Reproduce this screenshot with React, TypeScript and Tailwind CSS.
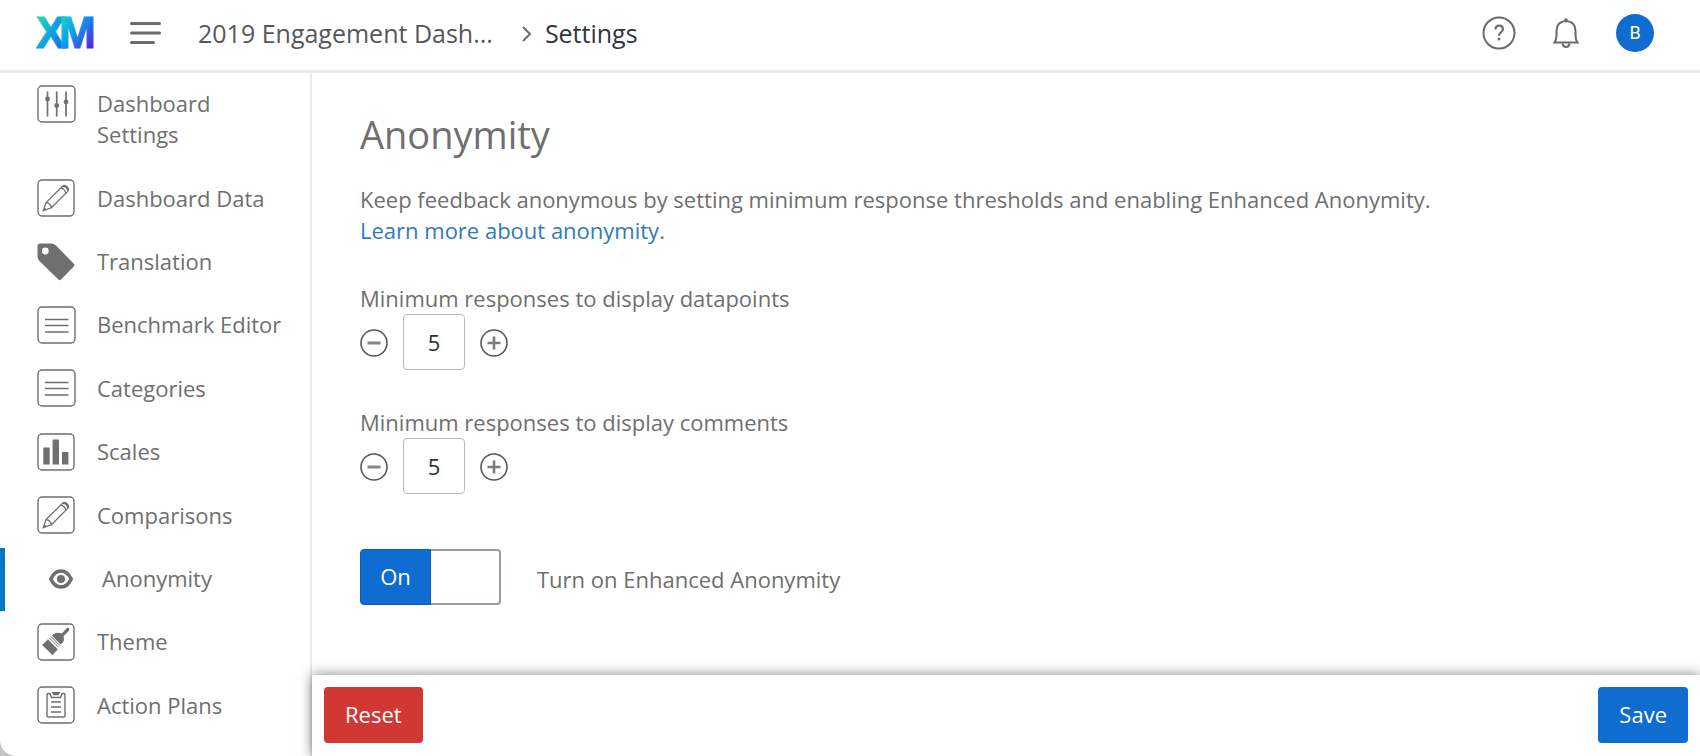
import * as React from 'react';
import clsx from 'clsx';

type IconProps = { children: React.ReactNode; width?: number };

// Rounded frame that most of the sidebar icons sit in
function BoxIcon({ children, width = 38 }: IconProps) {
    return (
        <svg width={width} height="38" viewBox={`0 0 ${width} 38`} fill="none" stroke="#6f6f6f" strokeWidth="1.4" className="shrink-0" aria-hidden="true">
            <rect x="1" y="1" width={width - 2} height="36" rx="4" />
            {children}
        </svg>
    );
}

function SlidersIcon() {
    return (
        <BoxIcon width={39}>
            <path d="M10.5 6.5v25M19.7 6.5v25M29 6.5v25" strokeWidth="1.7" />
            <g fill="#6f6f6f" stroke="none">
                <circle cx="10.5" cy="14" r="2.4" />
                <circle cx="19.7" cy="20.5" r="2.4" />
                <circle cx="29" cy="17" r="2.4" />
            </g>
        </BoxIcon>
    );
}

function PencilIcon() {
    return (
        <BoxIcon>
            <path d="M6.3 31.7 9 23.6 25.6 7.2q1.8-1.6 4 .2l1 1q1.8 2.2.2 4L14.4 28.8ZM9 23.6q4.6.6 5.4 5.2M23.6 9.2q4.2.4 5.2 5.2M26 7q4.4.8 5 5.4M7.2 29l1.9 1.7" strokeWidth="1.3" />
        </BoxIcon>
    );
}

function TagIcon() {
    return (
        <svg width="38" height="38" viewBox="0 0 38 38" fill="#6f6f6f" className="shrink-0" aria-hidden="true">
            <path fillRule="evenodd" d="M3 .5h11.5q2.5 0 4.5 2L36.8 20.8q1.2 1.3 0 2.6L24 36.6q-1.3 1.2-2.6 0L2.5 18Q.5 16 .5 13.5V3Q.5.5 3 .5ZM8.3 4.6a3.4 3.4 0 1 0 0 6.8 3.4 3.4 0 0 0 0-6.8Z" />
        </svg>
    );
}

function ListIcon() {
    return (
        <BoxIcon width={39}>
            <path d="M8 13.5h23.5M8 19.5h23.5M8 26h23.5" strokeWidth="1.5" />
        </BoxIcon>
    );
}

function BarsIcon() {
    return (
        <BoxIcon>
            <g fill="#6f6f6f" stroke="none">
                <rect x="6.3" y="14.5" width="6.4" height="17" rx=".5" />
                <rect x="15.6" y="6.5" width="6.4" height="25" rx=".5" />
                <rect x="25" y="19" width="6.4" height="12.5" rx=".5" />
            </g>
        </BoxIcon>
    );
}

function EyeIcon() {
    return (
        <svg width="38" height="38" viewBox="0 0 38 38" fill="none" stroke="#6f6f6f" className="shrink-0" aria-hidden="true">
            <path d="M8.8 19Q12.5 11 19 11t10.2 8Q25.5 27 19 27T8.8 19Z" strokeWidth="3.6" strokeLinejoin="round" />
            <circle cx="19" cy="19" r="4" fill="#6f6f6f" stroke="none" />
        </svg>
    );
}

function BrushIcon() {
    return (
        <BoxIcon>
            <g fill="#6f6f6f" stroke="none">
                <path d="M29.5 5.5q1.5-1.2 2.5-.2t-.1 2.5L26.5 13.2q1.2 3.500-.5 6L23.7 21.5 14.8 12.5q1.7-1.8 4.2-2.5 3-.9 5.7.4Z" />
                <path d="M11 16.2 20.8 26.4 15.3 32 6.8 23.5 5.3 22Z" />
                <path d="M5.3 22 9.5 19.5v6.5Z" />
            </g>
            <path d="M13.8 13.3 23 22.6M12.3 14.8 21.7 24.4" strokeWidth="1" />
        </BoxIcon>
    );
}

function ClipboardIcon() {
    return (
        <BoxIcon>
            <path d="M13 7.5h-1.5q-1.5 0-1.5 1.5v20.5q0 1.5 1.5 1.5h15q1.5 0 1.5-1.5V9q0-1.5-1.5-1.5H25l-1.5 4h-9Z" />
            <path d="M14 16h10M14 21h10M14 26h10" strokeWidth="1.5" />
            <path d="M14.5 6h9l-2 3.2h-5Z" fill="#6f6f6f" stroke="none" />
        </BoxIcon>
    );
}

function Logo() {
    return (
        <svg width="62" height="56" viewBox="0 0 62 56" role="img" aria-label="XM" className="shrink-0">
            <defs>
                <linearGradient id="logoX" x1="0" y1="0" x2="1" y2="1">
                    <stop offset="0.15" stopColor="#21dbaa" />
                    <stop offset="0.5" stopColor="#0aa5e6" />
                    <stop offset="0.9" stopColor="#1666e0" />
                </linearGradient>
                <linearGradient id="logoM" x1="0" y1="0" x2="1" y2="1">
                    <stop offset="0.1" stopColor="#1fd6c0" />
                    <stop offset="0.45" stopColor="#0a9bee" />
                    <stop offset="0.85" stopColor="#5a22dd" />
                </linearGradient>
            </defs>
            <g fontFamily="Liberation Sans, sans-serif" fontWeight="700" fontSize="44" strokeWidth="1.2">
                <text x="0" y="43" fill="url(#logoX)" stroke="url(#logoX)">X</text>
                <text x="23" y="43" fill="url(#logoM)" stroke="url(#logoM)">M</text>
            </g>
        </svg>
    );
}

const navItems = [
    { label: 'Dashboard Settings', icon: <SlidersIcon /> },
    { label: 'Dashboard Data', icon: <PencilIcon /> },
    { label: 'Translation', icon: <TagIcon /> },
    { label: 'Benchmark Editor', icon: <ListIcon /> },
    { label: 'Categories', icon: <ListIcon /> },
    { label: 'Scales', icon: <BarsIcon /> },
    { label: 'Comparisons', icon: <PencilIcon /> },
    { label: 'Anonymity', icon: <EyeIcon />, active: true },
    { label: 'Theme', icon: <BrushIcon /> },
    { label: 'Action Plans', icon: <ClipboardIcon /> },
];

function Header() {
    return (
        <header className="flex h-[73px] items-center border-b-3 border-[#e9e9e9] pr-[46px] pb-1 pl-9">
            <Logo />
            <button aria-label="Menu" className="ml-[30px]">
                <svg width="34" height="24" viewBox="0 0 34 24" stroke="#6b6b6b" strokeWidth="3" strokeLinecap="round">
                    <path d="M3.500 2.5h28M3.500 12h28M3.500 21.5h22" />
                </svg>
            </button>
            <nav aria-label="Breadcrumb" className="ml-9 flex items-center text-[25px] leading-[34px]">
                <a href="#dashboard" className="text-[#54585c]">2019 Engagement Dash...</a>
                <svg width="12" height="18" viewBox="0 0 12 18" fill="none" stroke="#6b6b6b" strokeWidth="2" className="mr-3 ml-7" aria-hidden="true">
                    <path d="m2 3 7 7-7 7" />
                </svg>
                <span className="text-[#32363a]">Settings</span>
            </nav>
            <div className="ml-auto flex items-center gap-9">
                <button aria-label="Help">
                    <svg width="34" height="34" viewBox="0 0 34 34" fill="none" stroke="#6b6b6b" strokeWidth="2">
                        <circle cx="17" cy="17" r="15.5" />
                        <path d="M13.5 13.5q0-3.8 3.7-3.8t3.7 3.5q0 1.8-2 3.2t-1.9 3.3" strokeWidth="2.2" />
                        <circle cx="17" cy="23" r="1.5" fill="#6b6b6b" stroke="none" />
                    </svg>
                </button>
                <button aria-label="Notifications">
                    <svg width="28" height="32" viewBox="0 0 28 32" fill="none" stroke="#6b6b6b" strokeWidth="2">
                        <path d="M2.5 25.5h23q-2-3-2-7V14q0-9.500-9.500-10-9.500.500-9.500 10v4.500q0 4-2 7Z" />
                        <path d="M10.5 26.5q.5 3.500 3.500 3.500t3.500-3.500" />
                        <circle cx="14" cy="3" r="1.8" fill="#6b6b6b" stroke="none" />
                    </svg>
                </button>
                <button className="flex size-[38px] items-center justify-center rounded-full bg-[#0f6cd1] font-[Roboto,sans-serif] text-lg text-white">B</button>
            </div>
        </header>
    );
}

function Sidebar() {
    return (
        <nav aria-label="Settings" className="flex w-[312px] shrink-0 border-r-2 border-[#e9e9e9] pb-[18px]">
            <ul className="flex flex-1 flex-col">
                {navItems.map((item) => (
                    <li key={item.label} className={clsx('flex grow items-center pt-[15px] pb-[17px]', item.active && 'border-l-5 border-[#0077c2]')}>
                        <a href="#" aria-current={item.active ? 'page' : undefined} className="flex pl-[37px]">
                            <span className="flex h-[31px] w-15 shrink-0 items-center">{item.icon}</span>
                            <span className="max-w-[190px]">{item.label}</span>
                        </a>
                    </li>
                ))}
            </ul>
        </nav>
    );
}

function Stepper({ id, label }: { id: string; label: string }) {
    const [value, setValue] = React.useState(5);

    return (
        <div className="mt-[37px]">
            <label htmlFor={id} className="block">{label}</label>
            <div className="flex items-center gap-[15px]">
                <button aria-label="Decrease" className="pt-0.5" onClick={() => setValue(Math.max(1, value - 1))}>
                    <svg width="28" height="28" viewBox="0 0 28 28" fill="none" stroke="#54585c" strokeWidth="1.6">
                        <circle cx="14" cy="14" r="13" />
                        <path d="M7.5 14h13" stroke="#868686" strokeWidth="3" />
                    </svg>
                </button>
                <input
                    id={id}
                    value={value}
                    onChange={(e) => setValue(Number(e.target.value) || 0)}
                    className="h-14 w-[62px] rounded-sm border border-[#bcbcbc] text-center text-[#2b2f33]"
                />
                <button aria-label="Increase" className="pt-0.5" onClick={() => setValue(value + 1)}>
                    <svg width="28" height="28" viewBox="0 0 28 28" fill="none" stroke="#54585c" strokeWidth="1.6">
                        <circle cx="14" cy="14" r="13" />
                        <path d="M7.5 14h13M14 7.5v13" stroke="#7c7c7c" strokeWidth="2.6" />
                    </svg>
                </button>
            </div>
        </div>
    );
}

function Toggle() {
    const [on, setOn] = React.useState(true);

    return (
        <label className="mt-[55px] flex w-fit items-center gap-9">
            <input type="checkbox" className="sr-only" checked={on} onChange={() => setOn(!on)} />
            <span className={clsx('flex h-14 w-[141px]', !on && 'flex-row-reverse')}>
                <span
                    className={clsx(
                        'flex w-[71px] items-center justify-center border pb-0.5 text-white',
                        on ? 'rounded-l-sm border-[#0b5cb4] bg-[#0f6cd1]' : 'rounded-r-sm border-[#949ca6] bg-[#949ca6]'
                    )}
                >
                    {on ? 'On' : 'Off'}
                </span>
                <span className={clsx('flex-1 border-y-2 border-[#949ca6]', on ? 'rounded-r-sm border-r-2' : 'rounded-l-sm border-l-2')} />
            </span>
            <span className="pt-1">Turn on Enhanced Anonymity</span>
        </label>
    );
}

export default function App() {
    return (
        <div className="bg-[#c4c4c4]">
            <div className="flex min-h-screen flex-col overflow-hidden rounded-bl-2xl bg-white font-['Open_Sans',sans-serif] text-[22px] leading-[31px] text-[#6f6f6f]">
                <Header />
                <div className="flex flex-1">
                    <Sidebar />
                    <div className="flex min-w-0 flex-1 flex-col">
                        <main className="flex-1 px-12 pt-[35px] pb-12">
                            <h1 className="text-[38px] leading-[52px]">Anonymity</h1>
                            <p className="mt-6">
                                Keep feedback anonymous by setting minimum response thresholds and enabling Enhanced Anonymity.
                                <br />
                                <a href="#anonymity" className="text-[#2f7bbd]">Learn more about anonymity</a>.
                            </p>
                            <Stepper id="min-datapoints" label="Minimum responses to display datapoints" />
                            <Stepper id="min-comments" label="Minimum responses to display comments" />
                            <Toggle />
                        </main>
                        <footer className="flex justify-between bg-white px-3 pt-3 pb-[13px] shadow-[0_0_12px_rgba(0,0,0,0.5)]">
                            <button className="h-14 rounded-sm bg-[#d13834] px-[21px] pb-0.5 text-white">Reset</button>
                            <button className="h-14 rounded-sm bg-[#0f6cd1] px-[21px] pb-0.5 text-white">Save</button>
                        </footer>
                    </div>
                </div>
            </div>
        </div>
    );
}
